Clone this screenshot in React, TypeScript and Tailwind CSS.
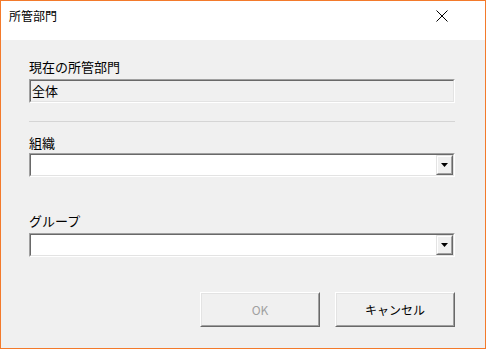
import React from "react";

const font = { fontFamily: '"Noto Sans CJK JP", "Noto Sans", sans-serif' };

function Sunken({ children, bg, className = "" }: { children?: React.ReactNode; bg: string; className?: string }) {
  return (
    <div className={`h-[24px] border border-t-[#a0a0a0] border-l-[#a0a0a0] border-b-white border-r-white ${className}`}>
      <div className={`h-full border border-t-[#696969] border-l-[#696969] border-b-[#e3e3e3] border-r-[#e3e3e3] ${bg} flex items-center`}>
        {children}
      </div>
    </div>
  );
}

function Combo() {
  return (
    <Sunken bg="bg-white">
      <div className="flex-1" />
      <div className="h-full w-[17px] border border-t-[#e3e3e3] border-l-[#e3e3e3] border-b-[#696969] border-r-[#696969]">
        <div className="h-full w-full border border-t-white border-l-white border-b-[#a0a0a0] border-r-[#a0a0a0] bg-[#f0f0f0] flex items-center justify-center">
          <svg width="7" height="4" viewBox="0 0 7 4"><path d="M0 0H7L3.5 4Z" fill="#000" /></svg>
        </div>
      </div>
    </Sunken>
  );
}

function Button({ children, disabled }: { children: React.ReactNode; disabled?: boolean }) {
  return (
    <div className="w-[120px] h-[35px] border border-t-white border-l-white border-b-[#696969] border-r-[#696969]">
      <div className={`h-full w-full border border-t-[#e3e3e3] border-l-[#e3e3e3] border-b-[#a0a0a0] border-r-[#a0a0a0] bg-[#f0f0f0] flex items-center justify-center text-[12px] ${disabled ? "text-[#a0a0a0]" : "text-black"}`}>
        {children}
      </div>
    </div>
  );
}

export default function App() {
  return (
    <div style={font} className="w-[486px] h-[349px] border border-[#f37a2b] bg-[#f0f0f0] flex flex-col text-black">
      <div className="h-[39px] bg-white flex items-start justify-between">
        <div className="pl-[8px] pt-[7px] text-[12px] leading-[16px]">所管部門</div>
        <svg className="mt-[9px] mr-[37px]" width="12" height="12" viewBox="0 0 12 12">
          <path d="M0.5 0.5L11.5 11.5M11.5 0.5L0.5 11.5" stroke="#000" strokeWidth="1" />
        </svg>
      </div>
      <div className="flex flex-col pl-[28px] w-[454px] text-[13px] leading-[16px]">
        <div className="mt-[19px]">現在の所管部門</div>
        <Sunken bg="bg-[#f0f0f0]" className="mt-[4px]">
          <span className="pl-[1px]">全体</span>
        </Sunken>
        <div className="mt-[18px] h-px bg-[#d5d5d5]" />
        <div className="mt-[13px]">組織</div>
        <div className="mt-[2px]"><Combo /></div>
        <div className="mt-[36px]">グループ</div>
        <div className="mt-[4px]"><Combo /></div>
        <div className="mt-[35px] flex justify-end gap-[15px]">
          <Button disabled>OK</Button>
          <Button>キャンセル</Button>
        </div>
      </div>
    </div>
  );
}
